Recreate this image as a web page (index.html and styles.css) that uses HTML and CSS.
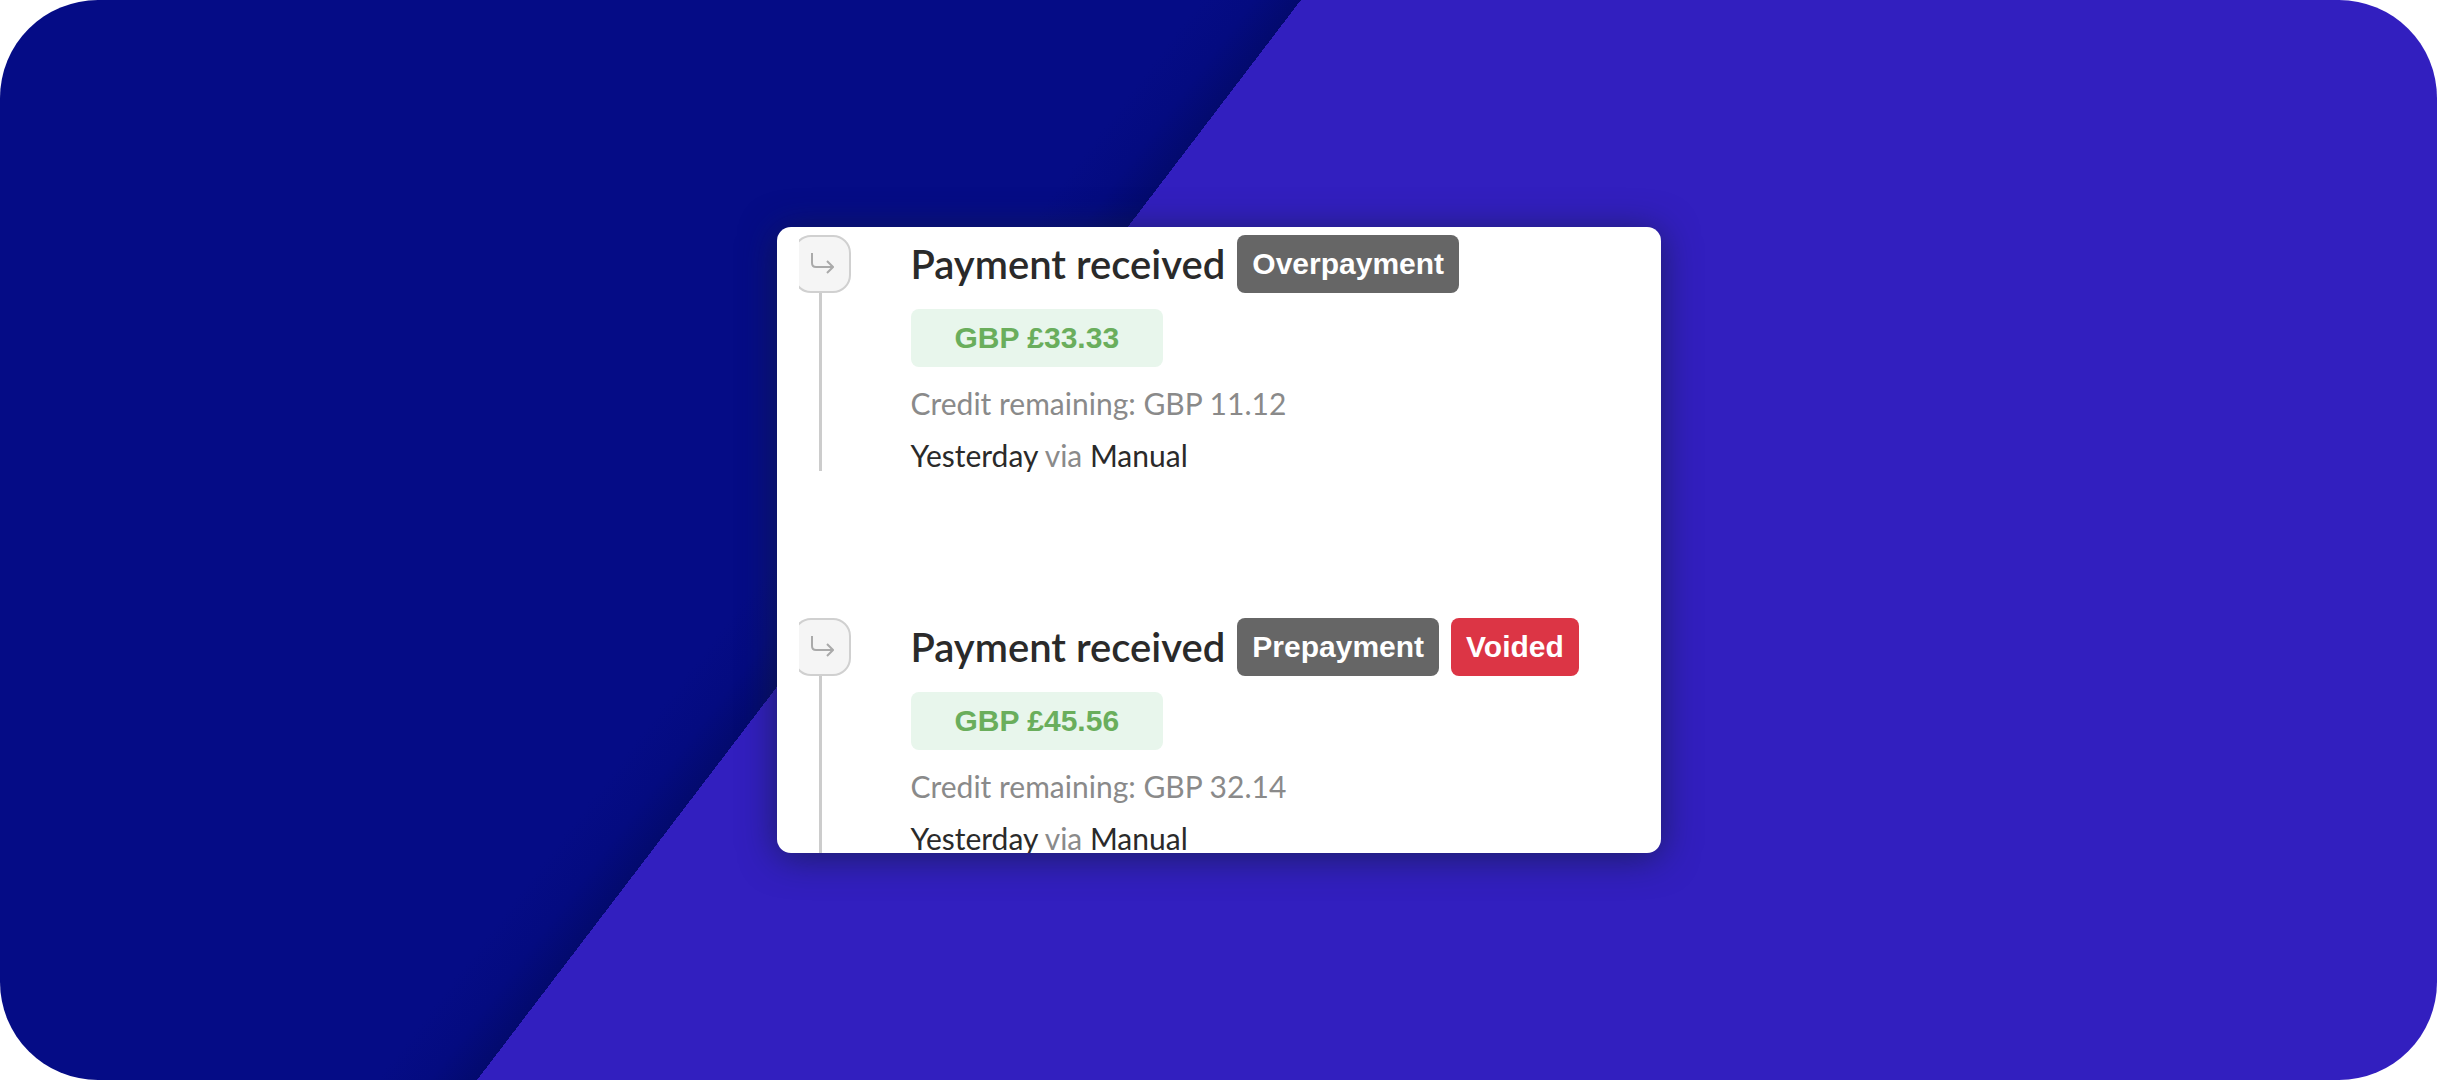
FILE: index.html
```html
<!DOCTYPE html>
<html lang="en">
	<head>
		<meta charset="UTF-8">
		<title>Payment received</title>
		<link rel="stylesheet" href="styles.css">
	</head>

	<body>
		<div class="banner">
			<div class="card">
				<!-- overpayment -->
				<div class="item">
					<div class="marker">
						<span class="icon">
							<svg width="24" height="22" viewBox="0 0 24 22"><path d="M2 0V10Q2 14 6 14H22M17 8L23 14L17 20" /></svg>
						</span>
					</div>
					<div class="info">
						<div class="head">
							<h3 class="title">Payment received</h3>
							<span class="badge">Overpayment</span>
						</div>
						<span class="amount">GBP £33.33</span>
						<p class="line">Credit remaining: GBP 11.12</p>
						<p class="line"><b>Yesterday</b> via <b>Manual</b></p>
					</div>
				</div>

				<!-- prepayment -->
				<div class="item">
					<div class="marker">
						<span class="icon">
							<svg width="24" height="22" viewBox="0 0 24 22"><path d="M2 0V10Q2 14 6 14H22M17 8L23 14L17 20" /></svg>
						</span>
					</div>
					<div class="info">
						<div class="head">
							<h3 class="title">Payment received</h3>
							<span class="badge">Prepayment</span>
							<span class="badge voided">Voided</span>
						</div>
						<span class="amount">GBP £45.56</span>
						<p class="line">Credit remaining: GBP 32.14</p>
						<p class="line"><b>Yesterday</b> via <b>Manual</b></p>
					</div>
				</div>
			</div>
		</div>
	</body>
</html>
```

FILE: styles.css
```css
*{
	margin: 0;
	padding: 0;
	box-sizing: border-box;
}
body{
	background: white;
	font-family: Lato, sans-serif;
}
.banner{
	min-height: 100vh;
	display: flex;
	align-items: center;
	justify-content: center;
	border-radius: 98px;
	/* dark side, soft shade, then the bright side */
	background: linear-gradient(127.34deg, #050c86 calc(50% - 342px), #040b80 calc(50% - 300px), #030a6e calc(50% - 262px), #321fbf calc(50% - 262px));
}
.card{
	width: 100%;
	max-width: 884px;
	height: 626px;
	padding: 8px 22px 0;
	background: white;
	border-radius: 14px;
	box-shadow: 0 4px 36px rgba(20, 30, 60, 0.7);
	overflow: hidden;
}
.item{
	display: flex;
	gap: 60px;
	margin-bottom: 137px;
}
/* left side of the icon is cut off */
.marker{
	width: 52px;
	display: flex;
	flex-direction: column;
	align-items: flex-end;
	padding-bottom: 10px;
	overflow: hidden;
}
.marker::after{
	content: "";
	flex: 1;
	width: 3px;
	margin-right: 29px;
	background: #ccc;
}
.icon{
	width: 58px;
	height: 58px;
	display: flex;
	align-items: center;
	justify-content: center;
	background: #f5f5f5;
	border: 2px solid #d0d0d0;
	border-radius: 18px;
}
.icon path{
	fill: none;
	stroke: #aaa;
	stroke-width: 2;
}
.head{
	display: flex;
	gap: 12px;
	margin-bottom: 16px;
}
.title{
	font-size: 40px;
	line-height: 58px;
	font-weight: 600;
	color: #2a2a2a;
}
.badge,.amount{
	font-family: "Liberation Sans", sans-serif;
	font-size: 30px;
	line-height: 58px;
	font-weight: bold;
	border-radius: 8px;
}
.badge{
	padding: 0 15px;
	background: #666;
	color: white;
}
.voided{
	background: #dc3545;
}
.amount{
	display: inline-block;
	padding: 0 44px;
	margin-bottom: 10px;
	background: #e8f6ec;
	color: #6aae5c;
	vertical-align: top;
}
.line{
	font-size: 30px;
	line-height: 52px;
	color: #8a8a8a;
}
.line b{
	font-weight: normal;
	color: #2a2a2a;
}
```
